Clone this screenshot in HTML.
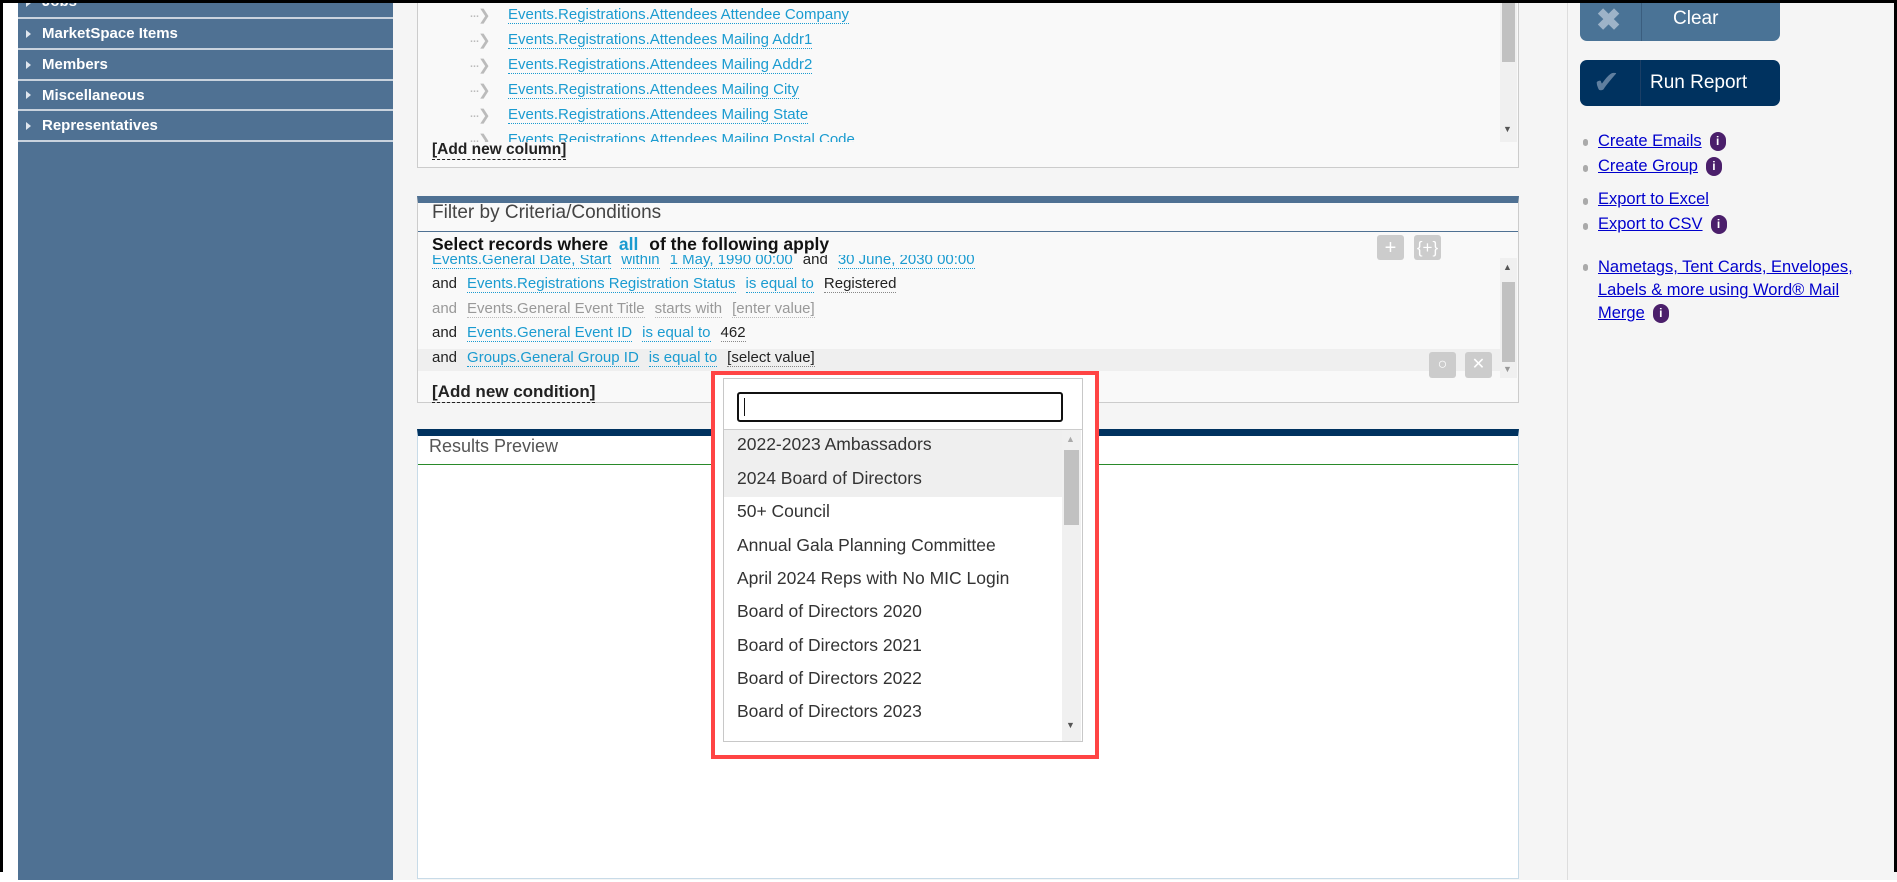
<!DOCTYPE html>
<html><head><meta charset="utf-8"><style>
*{box-sizing:border-box;margin:0;padding:0}
body{width:1897px;height:872px;overflow:hidden;background:#fff;font-family:"Liberation Sans",Arial,sans-serif;position:relative}
.wrap{position:absolute;left:0;top:2px;width:1897px;height:880px}
.a{position:absolute}
.sb{left:18px;top:-2px;width:375px;height:880px;background:#4f7193}
.si{position:absolute;left:0;width:375px;border-bottom:2px solid #c9d3de;color:#fff;font-weight:bold;font-size:15px;padding-left:24px}
.si:before{content:"";position:absolute;left:8px;top:50%;margin-top:-4px;border-left:5px solid #dfe6ee;border-top:4px solid transparent;border-bottom:4px solid transparent}
.main{left:393px;top:-2px;width:1174px;height:880px;background:#f5f5f5}
.rp{left:1567px;top:-2px;width:330px;height:880px;background:#f5f5f5;border-left:1px solid #ddd}
.lnk{color:#1a9bd0;border-bottom:1px dotted #1a9bd0}
.col{font-size:15px;position:absolute;left:508px}
.arr{position:absolute;left:469px;color:#bbb;font-size:15px;letter-spacing:-2px}
.row{position:absolute;left:432px;font-size:15px;color:#222;white-space:nowrap}
.row span{margin-right:10px}
.g{color:#999}
.gl{color:#999;border-bottom:1px dotted #bbb}
.btn{position:absolute;background:#ccc;border-radius:3px;color:#fff;text-align:center;font-size:20px;line-height:26px}
.it{position:absolute;left:737px;font-size:17.5px;color:#333}
.rl{position:absolute;left:1598px;font-size:16.5px;color:#00c;text-decoration:underline}
.bul{position:absolute;left:1583px;width:5px;height:7px;background:#aaa;border-radius:3px}
.inf{display:inline-block;width:16px;height:19px;border-radius:8px;background:#4b1f6b;color:#fff;font-size:12px;font-weight:bold;text-align:center;line-height:19px;margin-left:8px;vertical-align:1px;text-decoration:none}
</style></head><body>
<div class="wrap">
<div class="a sb">
<div class="si" style="top:-11px;height:30px;line-height:26px">Jobs</div>
<div class="si" style="top:19px;height:31px;line-height:30px">MarketSpace Items</div>
<div class="si" style="top:50px;height:31px;line-height:30px">Members</div>
<div class="si" style="top:81px;height:30px;line-height:30px">Miscellaneous</div>
<div class="si" style="top:111px;height:31px;line-height:30px">Representatives</div>
</div>
<div class="a main"></div>
<div class="a rp"></div>

<div class="a" style="left:417px;top:-5px;width:1102px;height:171px;background:#f9f9f9;border:1px solid #ccc"></div>
<div class="a" style="left:1500px;top:-2px;width:17px;height:142px;background:#f0f0f0"></div>
<div class="a" style="left:1502px;top:-2px;width:13px;height:62px;background:#c1c1c1"></div>
<div class="a" style="left:1503px;top:122px;color:#555;font-size:9px">▼</div>
<div class="a" style="left:417px;top:-2px;width:1080px;height:142px;overflow:hidden">
<div class="arr" style="left:52px;top:6px">···❯</div><div class="col" style="left:91px;top:6px"><span class="lnk">Events.Registrations.Attendees Attendee Company</span></div>
<div class="arr" style="left:52px;top:31px">···❯</div><div class="col" style="left:91px;top:31px"><span class="lnk">Events.Registrations.Attendees Mailing Addr1</span></div>
<div class="arr" style="left:52px;top:56px">···❯</div><div class="col" style="left:91px;top:56px"><span class="lnk">Events.Registrations.Attendees Mailing Addr2</span></div>
<div class="arr" style="left:52px;top:81px">···❯</div><div class="col" style="left:91px;top:81px"><span class="lnk">Events.Registrations.Attendees Mailing City</span></div>
<div class="arr" style="left:52px;top:106px">···❯</div><div class="col" style="left:91px;top:106px"><span class="lnk">Events.Registrations.Attendees Mailing State</span></div>
<div class="arr" style="left:52px;top:131px">···❯</div><div class="col" style="left:91px;top:131px"><span class="lnk">Events.Registrations.Attendees Mailing Postal Code</span></div>
</div>
<div class="a" style="left:432px;top:139px;font-size:15.5px;font-weight:bold;color:#222;border-bottom:1px dashed #222">[Add new column]</div>

<div class="a" style="left:417px;top:194px;width:1102px;height:207px;background:#f9f9f9;border:1px solid #ccc;border-top:7px solid #4f7193"></div>
<div class="a" style="left:432px;top:200px;font-size:19px;color:#444">Filter by Criteria/Conditions</div>
<div class="a" style="left:418px;top:229px;width:1100px;height:1px;background:#4f7193"></div>
<div class="a" style="left:418px;top:347px;width:1082px;height:22px;background:#efefef"></div>
<div class="a" style="left:418px;top:250px;width:1082px;height:120px;overflow:hidden">
<div class="row" style="left:14px;top:-1px"><span class="lnk">Events.General Date, Start</span><span class="lnk">within</span><span class="lnk">1 May, 1990 00:00</span><span>and</span><span class="lnk">30 June, 2030 00:00</span></div>
<div class="row" style="left:14px;top:23px"><span>and</span><span class="lnk">Events.Registrations Registration Status</span><span class="lnk">is equal to</span><span style="border-bottom:1px dotted #888">Registered</span></div>
<div class="row" style="left:14px;top:48px"><span class="g">and</span><span class="gl">Events.General Event Title</span><span class="gl">starts with</span><span class="gl">[enter value]</span></div>
<div class="row" style="left:14px;top:72px"><span>and</span><span class="lnk">Events.General Event ID</span><span class="lnk">is equal to</span><span style="border-bottom:1px dotted #888">462</span></div>
<div class="row" style="left:14px;top:97px"><span>and</span><span class="lnk">Groups.General Group ID</span><span class="lnk">is equal to</span><span style="border-bottom:1px dotted #888">[select value]</span></div>
</div>
<div class="a" style="left:418px;top:231px;width:1082px;height:22px;background:#f9f9f9"></div>
<div class="a" style="left:432px;top:232px;font-size:17.5px;font-weight:bold;color:#111">Select records where <span style="color:#1a9bd0;margin:0 6px">all</span> of the following apply</div>
<div class="btn" style="left:1377px;top:233px;width:27px;height:25px">+</div>
<div class="btn" style="left:1414px;top:233px;width:27px;height:25px;font-size:17px">{+}</div>
<div class="btn" style="left:1429px;top:350px;width:27px;height:26px;font-size:16px">○</div>
<div class="btn" style="left:1465px;top:350px;width:27px;height:26px;font-size:16px">✕</div>
<div class="a" style="left:1500px;top:256px;width:17px;height:120px;background:#f0f0f0"></div>
<div class="a" style="left:1502px;top:280px;width:13px;height:80px;background:#c1c1c1"></div>
<div class="a" style="left:1503px;top:260px;color:#555;font-size:9px">▲</div>
<div class="a" style="left:1503px;top:362px;color:#999;font-size:9px">▼</div>
<div class="a" style="left:432px;top:380px;font-size:17px;font-weight:bold;color:#222;border-bottom:1px dashed #222">[Add new condition]</div>

<div class="a" style="left:417px;top:427px;width:1102px;height:450px;background:#fff;border:1px solid #c8dbe8;border-top:7px solid #00325f"></div>
<div class="a" style="left:429px;top:434px;font-size:18px;color:#555">Results Preview</div>
<div class="a" style="left:418px;top:462px;width:1100px;height:1px;background:#2a8a2a"></div>

<div class="a" style="left:711px;top:369px;width:388px;height:388px;border:4px solid #f44;background:#fff"></div>
<div class="a" style="left:723px;top:376px;width:360px;height:364px;border:1px solid #c8c8c8;background:#fff"></div>
<div class="a" style="left:737px;top:390px;width:326px;height:30px;border:2px solid #111;border-radius:3px"></div>
<div class="a" style="left:744px;top:396px;width:1px;height:18px;background:#111"></div>
<div class="a" style="left:724px;top:427px;width:358px;height:1px;background:#ccc"></div>
<div class="a" style="left:724px;top:428px;width:338px;height:67px;background:#efefef"></div>
<div class="a" style="left:1062px;top:428px;width:19px;height:311px;background:#f0f0f0"></div>
<div class="a" style="left:1064px;top:448px;width:15px;height:75px;background:#c1c1c1"></div>
<div class="a" style="left:1066px;top:432px;color:#aaa;font-size:9px">▲</div>
<div class="a" style="left:1066px;top:718px;color:#555;font-size:9px">▼</div>
<div class="it" style="top:432px">2022-2023 Ambassadors</div>
<div class="it" style="top:466px">2024 Board of Directors</div>
<div class="it" style="top:499px">50+ Council</div>
<div class="it" style="top:533px">Annual Gala Planning Committee</div>
<div class="it" style="top:566px">April 2024 Reps with No MIC Login</div>
<div class="it" style="top:599px">Board of Directors 2020</div>
<div class="it" style="top:633px">Board of Directors 2021</div>
<div class="it" style="top:666px">Board of Directors 2022</div>
<div class="it" style="top:699px">Board of Directors 2023</div>

<div class="a" style="left:1580px;top:-12px;width:200px;height:51px;background:#4a7396;border-radius:7px"></div>
<div class="a" style="left:1641px;top:-3px;width:1px;height:42px;background:#3a5d7e"></div>
<div class="a" style="left:1596px;top:2px;color:#9db3c8;font-size:30px;font-weight:bold;line-height:34px">✖</div>
<div class="a" style="left:1673px;top:6px;color:#fff;font-size:19px">Clear</div>
<div class="a" style="left:1580px;top:58px;width:200px;height:46px;background:#00325f;border-radius:7px"></div>
<div class="a" style="left:1640px;top:58px;width:1px;height:46px;background:#1b3f66"></div>
<div class="a" style="left:1593px;top:62px;color:#5f7f9f;font-size:32px;line-height:36px">✔</div>
<div class="a" style="left:1650px;top:70px;color:#fff;font-size:19px">Run Report</div>
<div class="bul" style="top:137px"></div><div class="rl" style="top:130px">Create Emails<span class="inf">i</span></div>
<div class="bul" style="top:163px"></div><div class="rl" style="top:155px">Create Group<span class="inf">i</span></div>
<div class="bul" style="top:196px"></div><div class="rl" style="top:188px">Export to Excel</div>
<div class="bul" style="top:221px"></div><div class="rl" style="top:213px">Export to CSV<span class="inf">i</span></div>
<div class="bul" style="top:262px"></div><div class="rl" style="top:254px;line-height:23px;width:290px">Nametags, Tent Cards, Envelopes, Labels &amp; more using Word® Mail Merge<span class="inf">i</span></div>
</div>

<div class="a" style="left:0;top:0;width:1897px;height:3px;background:#000"></div>
<div class="a" style="left:0;top:0;width:3px;height:872px;background:#000"></div>
<div class="a" style="left:1894px;top:0;width:3px;height:872px;background:#000"></div>
</body></html>
